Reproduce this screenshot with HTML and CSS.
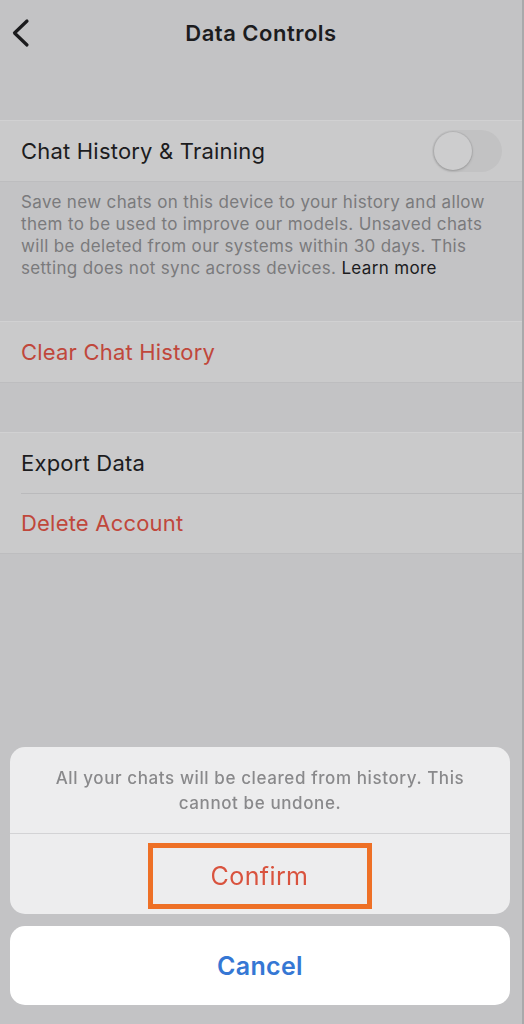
FILE: index.html
```html
<!DOCTYPE html>
<html lang="en">
<head>
    <meta charset="UTF-8">
    <meta name="viewport" content="width=device-width, initial-scale=1.0">
    <title>Data Controls</title>
    <link rel="stylesheet" href="styles.css">
</head>
<body>
    <div class="screen">
        <header class="nav">
            <svg class="back" width="20" height="30" viewBox="0 0 20 30">
                <path d="M16 3 L3.5 15 L16 27" fill="none" stroke="#1b1b1d" stroke-width="3.2" stroke-linecap="round" stroke-linejoin="round"/>
            </svg>
            <h1>Data Controls</h1>
        </header>

        <section class="group first">
            <div class="row">
                <span>Chat History &amp; Training</span>
                <div class="toggle"><div class="knob"></div></div>
            </div>
        </section>
        <p class="note">Save new chats on this device to your history and allow them to be used to improve our models. Unsaved chats will be deleted from our systems within 30 days. This setting does not sync across devices. <a href="#">Learn more</a></p>

        <section class="group">
            <div class="row danger">Clear Chat History</div>
        </section>

        <section class="group spaced">
            <div class="row">Export Data</div>
            <div class="row danger">Delete Account</div>
        </section>
    </div>

    <div class="sheet">
        <div class="sheet-card">
            <p class="sheet-msg">All your chats will be cleared from history. This cannot be undone.</p>
            <div class="sheet-action">
                <span class="highlight">Confirm</span>
            </div>
        </div>
        <div class="sheet-cancel">Cancel</div>
    </div>
</body>
</html>
```

FILE: styles.css
```css
body {
    margin: 0;
    background-color: #c3c3c5;
    font-family: Inter, "Open Sans", sans-serif;
    color: #1c1c1e;
}
.screen {
    height: 1024px;
    border-right: 2px solid #a9a9ab;
    box-sizing: border-box;
}
.nav {
    height: 66px;
    display: flex;
    align-items: center;
    justify-content: center;
    position: relative;
}
.nav h1 {
    margin: 0;
    font-size: 22px;
    font-weight: 600;
    letter-spacing: 0.5px;
}
.back {
    position: absolute;
    left: 11px;
    top: 18px;
}
.group {
    background-color: #cacacb;
    border-top: 1px solid #d1d1d2;
    border-bottom: 1px solid #bdbdbf;
}
.group.first {
    margin-top: 54px;
}
.group.spaced {
    margin-top: 49px;
}
.row {
    height: 60px;
    display: flex;
    align-items: center;
    justify-content: space-between;
    padding: 0 21px;
    font-size: 22px;
    letter-spacing: 0.2px;
    position: relative;
}
.row + .row::before {
    content: "";
    position: absolute;
    top: 0;
    left: 21px;
    right: 0;
    border-top: 1px solid #bababc;
}
.row.danger {
    color: #c0473b;
}
.toggle {
    width: 70px;
    height: 42px;
    border-radius: 21px;
    background-color: #c2c2c3;
    margin-right: -1px;
    display: flex;
    align-items: center;
}
.knob {
    width: 38px;
    height: 38px;
    border-radius: 50%;
    background-color: #cdcdce;
    margin-left: 2px;
    box-shadow: 0 1px 3px rgba(0, 0, 0, 0.18), 0 0 0 1px rgba(0, 0, 0, 0.05);
}
.note {
    margin: 0;
    padding: 9px 28px 42px 21px;
    font-size: 17px;
    line-height: 22px;
    color: #7a7a7c;
    letter-spacing: 0.35px;
}
.note a {
    color: #1c1c1e;
    text-decoration: none;
}
.sheet {
    position: fixed;
    left: 10px;
    right: 14px;
    bottom: 19px;
    display: flex;
    flex-direction: column;
    gap: 12px;
}
.sheet-card {
    background-color: #ededee;
    border-radius: 15px;
    overflow: hidden;
}
.sheet-msg {
    margin: 0;
    padding: 19px 36px 17px;
    text-align: center;
    font-size: 17px;
    font-weight: 500;
    line-height: 25px;
    letter-spacing: 0.6px;
    color: #89898b;
}
.sheet-action {
    height: 80px;
    border-top: 1px solid #d3d3d5;
    display: flex;
    align-items: center;
    justify-content: center;
}
.highlight {
    width: 224px;
    height: 66px;
    box-sizing: border-box;
    border: 5px solid #ee7026;
    display: flex;
    align-items: center;
    justify-content: center;
    font-size: 25px;
    letter-spacing: 0.4px;
    color: #d9533e;
    margin-left: -1px;
    margin-top: 3px;
}
.sheet-cancel {
    height: 79px;
    background-color: #ffffff;
    border-radius: 15px;
    display: flex;
    align-items: center;
    justify-content: center;
    font-size: 25px;
    font-weight: 600;
    letter-spacing: 0.3px;
    color: #3577d4;
}
```
